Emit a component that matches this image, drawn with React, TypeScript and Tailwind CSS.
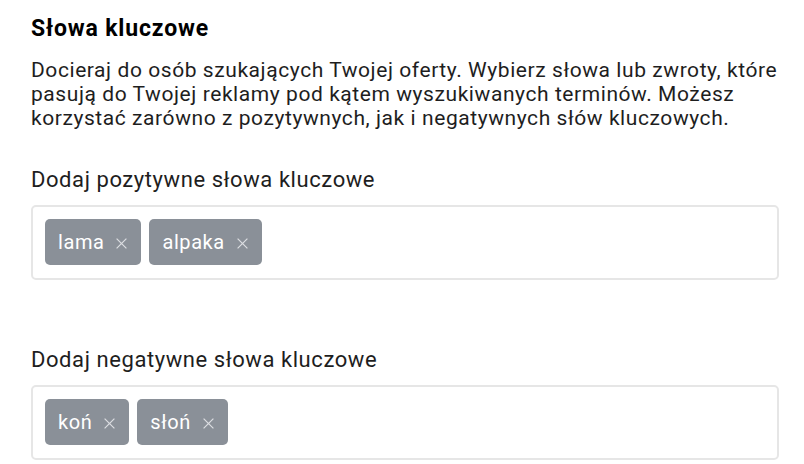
import React from "react";

type ChipProps = { label: string };

const Chip = ({ label }: ChipProps) => (
  <div className="flex h-[46px] items-center gap-[12px] rounded-[5px] bg-[#8a9098] pl-[13px] pr-[14px] text-[20px] tracking-[0.57px] text-white">
    <span>{label}</span>
    <svg width="11" height="11" viewBox="0 0 11 11" className="mt-[2px]">
      <path d="M0.6 0.6 L10.4 10.4 M10.4 0.6 L0.6 10.4" stroke="#dcdee2" strokeWidth="1.2" />
    </svg>
  </div>
);

const KeywordBox = ({ title, words }: { title: string; words: string[] }) => (
  <div>
    <div className="text-[22px] leading-[26px] tracking-[0.57px] text-[#1e1e1e]">{title}</div>
    <div className="mt-[12px] flex h-[75px] w-[748px] gap-[8px] rounded-[5px] border-2 border-[#e6e6e6] px-[12px] pt-[12px]">
      {words.map((w) => (
        <Chip key={w} label={w} />
      ))}
    </div>
  </div>
);

export default function App() {
  return (
    <div
      className="w-[804px] bg-white pl-[31px] pt-[15px] text-[#1e1e1e]"
      style={{ fontFamily: "Roboto, 'Noto Sans', sans-serif" }}
    >
      <h1 className="text-[23px] font-bold leading-[28px] tracking-[0.85px] text-black">Słowa kluczowe</h1>
      <p className="mt-[15px] w-[762px] text-[21px] leading-[24px] tracking-[0.57px] text-[#1e1e1e]">
        Docieraj do osób szukających Twojej oferty. Wybierz słowa lub zwroty, które pasują do Twojej
        reklamy pod kątem wyszukiwanych terminów. Możesz korzystać zarówno z pozytywnych, jak i
        negatywnych słów kluczowych.
      </p>
      <div className="mt-[37px]">
        <KeywordBox title="Dodaj pozytywne słowa kluczowe" words={["lama", "alpaka"]} />
      </div>
      <div className="mt-[67px]">
        <KeywordBox title="Dodaj negatywne słowa kluczowe" words={["koń", "słoń"]} />
      </div>
    </div>
  );
}
